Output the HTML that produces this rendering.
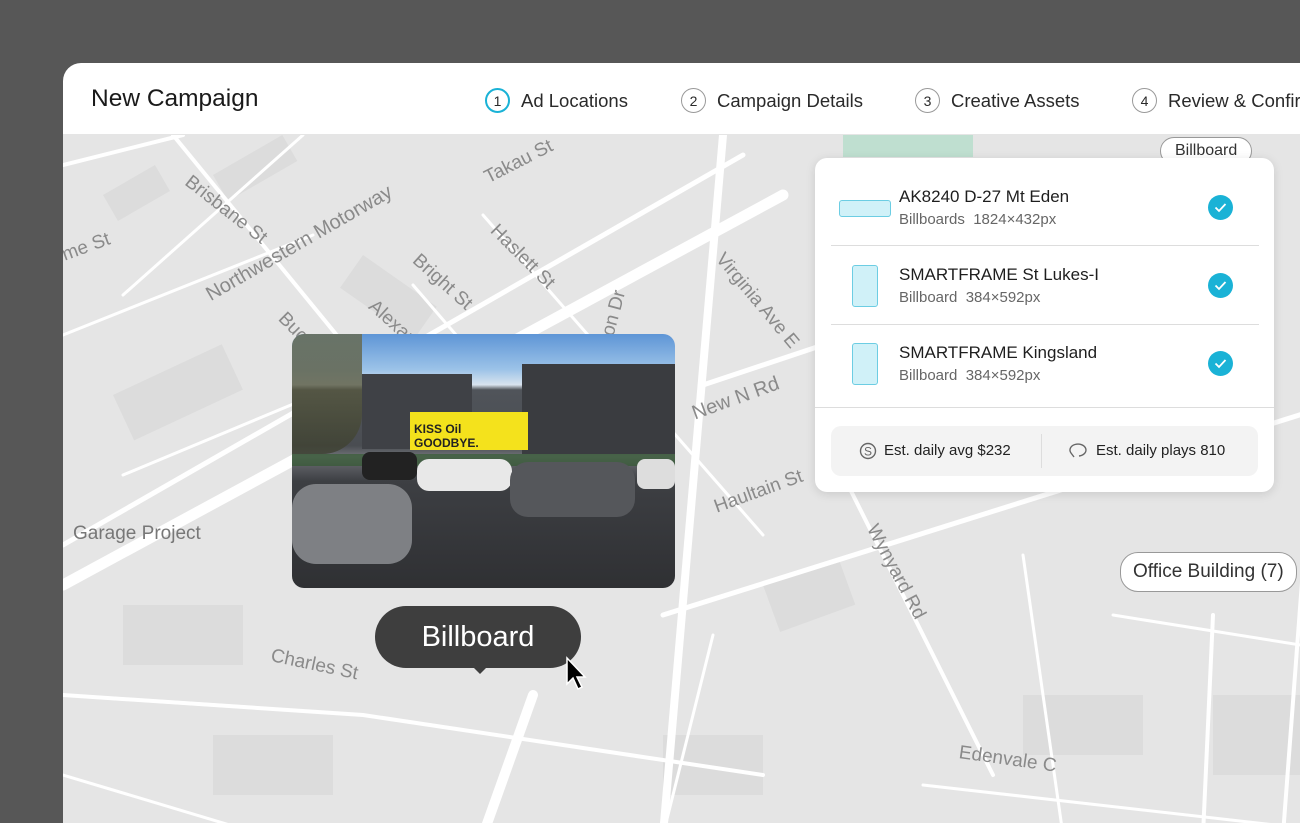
<!DOCTYPE html>
<html><head><meta charset="utf-8"><style>
*{margin:0;padding:0;box-sizing:border-box}
body{width:1300px;height:765px;background:#575757;font-family:"Liberation Sans",sans-serif;overflow:hidden;position:relative}
.win{position:absolute;left:63px;top:63px;width:1300px;height:760px;background:#fff;border-radius:18px 0 0 0;overflow:hidden}
.hdr{height:72px;position:relative;border-bottom:1px solid #e5e5e5}
.title{position:absolute;left:28px;top:22px;font-size:24.5px;color:#1a1a1a}
.step{position:absolute;top:25px;font-size:18.5px;color:#2a2a2a;display:flex;align-items:center;gap:11px}
.step i{font-style:normal;width:25px;height:25px;border:1.5px solid #999;border-radius:50%;display:flex;align-items:center;justify-content:center;font-size:14px}
.map{position:absolute;left:0;top:72px;width:1300px;height:700px;background:#e5e5e5}
.lbl{position:absolute;color:#8a8a8a;font-size:19px;white-space:nowrap;transform-origin:left center}
.panel{position:absolute;left:815px;top:158px;width:459px;height:334px;background:#fff;border-radius:12px;box-shadow:0 2px 10px rgba(0,0,0,.12)}
.row{position:absolute;left:16px;width:428px;height:78px;border-bottom:1px solid #ddd}
.row .n{position:absolute;left:68px;font-size:17px;color:#1e1e1e}
.row .s{position:absolute;left:68px;font-size:15px;color:#666}
.row .ck{position:absolute;left:377px;width:25px;height:25px;border-radius:50%;background:#1ab2d6}
.foot{position:absolute;left:16px;top:268px;width:427px;height:50px;background:#f3f3f3;border-radius:10px;font-size:15px;color:#222}
.bubble{position:absolute;background:#fff;border:1.5px solid #999;border-radius:18px;font-size:19px;color:#333;padding:8px 12px}
</style></head><body>
<div class="win">
<div class="hdr">
<div class="title">New Campaign</div>
<div class="step" style="left:422px"><i style="border-color:#1ab2d6;border-width:2px">1</i>Ad Locations</div>
<div class="step" style="left:618px"><i>2</i>Campaign Details</div>
<div class="step" style="left:852px"><i>3</i>Creative Assets</div>
<div class="step" style="left:1069px"><i>4</i>Review &amp; Confirm</div>
</div>
<div class="map">
<svg width="1300" height="700" style="position:absolute;left:0;top:0">
<g fill="#dcdcdc">
<rect x="40" y="60" width="60" height="30" transform="rotate(-30 40 60)"/><rect x="150" y="40" width="80" height="30" transform="rotate(-30 150 40)"/><rect x="300" y="120" width="90" height="40" transform="rotate(35 300 120)"/><rect x="700" y="450" width="80" height="50" transform="rotate(-20 700 450)"/><rect x="60" y="470" width="120" height="60"/><rect x="150" y="600" width="120" height="60"/><rect x="960" y="560" width="120" height="60"/><rect x="1150" y="560" width="120" height="80"/><rect x="600" y="600" width="100" height="60"/><rect x="50" y="260" width="120" height="50" transform="rotate(-25 50 260)"/>
</g>
<g stroke="#fff" fill="none" stroke-linecap="round">
<path d="M0 450 L720 60" stroke-width="11"/>
<path d="M0 410 L680 20" stroke-width="5"/>
<path d="M600 700 L660 0" stroke-width="8"/>
<path d="M420 700 L470 560" stroke-width="10"/>
<path d="M0 30 L120 0" stroke-width="4"/>
<path d="M110 0 L380 330" stroke-width="4"/>
<path d="M240 0 L60 160" stroke-width="3"/>
<path d="M350 150 L600 440" stroke-width="3"/>
<path d="M420 80 L700 400" stroke-width="3"/>
<path d="M640 250 L1000 130" stroke-width="5"/>
<path d="M600 480 L1300 260" stroke-width="5"/>
<path d="M780 340 L930 640" stroke-width="4"/>
<path d="M0 560 L300 580 L700 640" stroke-width="4"/>
<path d="M1050 480 L1300 520" stroke-width="3"/>
<path d="M860 650 L1300 700" stroke-width="3"/>
<path d="M1150 480 L1140 700" stroke-width="4"/>
<path d="M1250 300 L1220 700" stroke-width="4"/>
<path d="M0 200 L250 100" stroke-width="3"/>
<path d="M60 340 L300 240" stroke-width="3"/>
<path d="M650 500 L600 700" stroke-width="3"/>
<path d="M960 420 L1000 700" stroke-width="3"/>
<path d="M0 640 L200 700" stroke-width="3"/>
</g>
<rect x="780" y="0" width="130" height="22" fill="#bfdfd0"/>
</svg>
<div class="lbl" style="left:124px;top:34px;transform:rotate(38deg)">Brisbane St</div>
<div class="lbl" style="left:145px;top:150px;transform:rotate(-30deg);font-size:20px">Northwestern Motorway</div>
<div class="lbl" style="left:423px;top:33px;transform:rotate(-27deg)">Takau St</div>
<div class="lbl" style="left:430px;top:82px;transform:rotate(45deg)">Haslett St</div>
<div class="lbl" style="left:352px;top:112px;transform:rotate(42deg)">Bright St</div>
<div class="lbl" style="left:308px;top:158px;transform:rotate(42deg)">Alexand</div>
<div class="lbl" style="left:218px;top:170px;transform:rotate(45deg)">Buch</div>
<div class="lbl" style="left:0px;top:110px;transform:rotate(-20deg)">me St</div>
<div class="lbl" style="left:540px;top:210px;transform:rotate(-75deg)">nnon Dr</div>
<div class="lbl" style="left:656px;top:110px;transform:rotate(50deg)">Virginia Ave E</div>
<div class="lbl" style="left:630px;top:268px;transform:rotate(-20deg);font-size:20px">New N Rd</div>
<div class="lbl" style="left:652px;top:362px;transform:rotate(-20deg)">Haultain St</div>
<div class="lbl" style="left:808px;top:380px;transform:rotate(62deg)">Wynyard Rd</div>
<div class="lbl" style="left:10px;top:388px;color:#777">Garage Project</div>
<div class="lbl" style="left:208px;top:510px;transform:rotate(12deg)">Charles St</div>
<div class="lbl" style="left:896px;top:607px;transform:rotate(8deg)">Edenvale C</div>
<div class="bubble" style="left:1057px;top:417px">Office Building (7)</div>
<div class="bubble" style="left:1097px;top:2px;padding:4px 14px;font-size:16px">Billboard</div>
</div>
</div>
<!-- photo -->
<div style="position:absolute;left:292px;top:334px;width:383px;height:254px;border-radius:12px;overflow:hidden;background:linear-gradient(#5e95d6 0%,#9cc3e8 14%,#d8e3ee 20%,#50545a 22%,#4a4d52 44%,#6e7176 48%,#3d3f43 58%,#2f3033 100%)">
<div style="position:absolute;left:70px;top:40px;width:110px;height:75px;background:#3f4146"></div>
<div style="position:absolute;left:230px;top:30px;width:153px;height:90px;background:#3a3c40"></div>
<div style="position:absolute;left:0;top:0;width:70px;height:120px;background:linear-gradient(#6b6b4c,#3c3f30);opacity:.8;border-radius:0 0 40px 0"></div>
<div style="position:absolute;left:118px;top:78px;width:118px;height:38px;background:#f4e21c;font-size:12px;font-weight:bold;color:#222;padding:10px 4px">KISS Oil GOODBYE.</div>
<div style="position:absolute;left:0;top:120px;width:383px;height:12px;background:#2f5a2b;opacity:.6"></div>
<div style="position:absolute;left:125px;top:125px;width:95px;height:32px;background:#e8e8e8;border-radius:12px"></div>
<div style="position:absolute;left:218px;top:128px;width:125px;height:55px;background:#55575b;border-radius:18px"></div>
<div style="position:absolute;left:0;top:150px;width:120px;height:80px;background:#7e8084;border-radius:24px"></div>
<div style="position:absolute;left:70px;top:118px;width:55px;height:28px;background:#222;border-radius:8px"></div>
<div style="position:absolute;left:345px;top:125px;width:38px;height:30px;background:#ddd;border-radius:8px"></div>
</div>
<!-- billboard tooltip -->
<div style="position:absolute;left:375px;top:606px;width:206px;height:62px;background:#3e3e3e;border-radius:31px;color:#fff;font-size:29px;text-align:center;line-height:62px">Billboard</div>
<div style="position:absolute;left:472px;top:666px;border:8px solid transparent;border-top-color:#3e3e3e"></div>
<svg style="position:absolute;left:565px;top:656px" width="26" height="38"><path d="M2 2 L2 28 L8 22 L13 33 L17 31 L12 21 L20 21 Z" fill="#000" stroke="#fff" stroke-width="1.5"/></svg>
<!-- panel -->
<div class="panel">
<div class="row" style="top:10px"><div style="position:absolute;left:8px;top:32px;width:52px;height:17px;background:#d0f1f8;border:1.5px solid #6ccde3;border-radius:3px"></div><div class="n" style="top:19px">AK8240 D-27 Mt Eden</div><div class="s" style="top:43px">Billboards&nbsp; 1824×432px</div><div class="ck" style="top:27px"><svg width="25" height="25"><path d="M7.5 12.5l3.5 3.5 6.5-7" stroke="#fff" stroke-width="1.8" fill="none"/></svg></div></div>
<div class="row" style="top:88px;height:79px"><div style="position:absolute;left:21px;top:19px;width:26px;height:42px;background:#d0f1f8;border:1.5px solid #6ccde3;border-radius:3px"></div><div class="n" style="top:19px">SMARTFRAME St Lukes-I</div><div class="s" style="top:43px">Billboard&nbsp; 384×592px</div><div class="ck" style="top:27px"><svg width="25" height="25"><path d="M7.5 12.5l3.5 3.5 6.5-7" stroke="#fff" stroke-width="1.8" fill="none"/></svg></div></div>
<div class="row" style="top:167px;border:none"><div style="position:absolute;left:21px;top:18px;width:26px;height:42px;background:#d0f1f8;border:1.5px solid #6ccde3;border-radius:3px"></div><div class="n" style="top:18px">SMARTFRAME Kingsland</div><div class="s" style="top:42px">Billboard&nbsp; 384×592px</div><div class="ck" style="top:26px"><svg width="25" height="25"><path d="M7.5 12.5l3.5 3.5 6.5-7" stroke="#fff" stroke-width="1.8" fill="none"/></svg></div></div>
<div style="position:absolute;left:0;top:249px;width:459px;border-top:1px solid #ddd"></div>
<div class="foot">
<svg style="position:absolute;left:28px;top:16px" width="18" height="18"><circle cx="9" cy="9" r="7.5" stroke="#666" stroke-width="1.4" fill="none"/><text x="9" y="13.5" font-size="12" text-anchor="middle" fill="#666" font-family="Liberation Sans">S</text></svg>
<span style="position:absolute;left:53px;top:16px">Est. daily avg $232</span>
<div style="position:absolute;left:210px;top:8px;height:34px;border-left:1px solid #ddd"></div>
<svg style="position:absolute;left:237px;top:16px" width="22" height="18"><path d="M6 15 L3 11 A8 6 0 1 1 11 14" stroke="#666" stroke-width="1.4" fill="none"/></svg>
<span style="position:absolute;left:265px;top:16px">Est. daily plays 810</span>
</div>
</div>
</body></html>
